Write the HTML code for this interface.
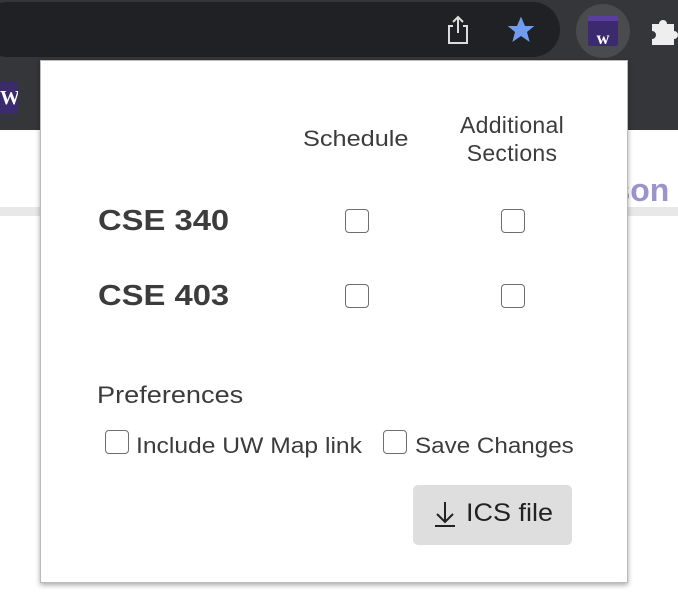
<!DOCTYPE html><html><head><style>
body{margin:0;width:678px;height:612px;position:relative;overflow:hidden;background:#fff;font-family:"Liberation Sans",sans-serif;color:#3c3c3c}
.a{position:absolute}
.s{transform-origin:0 0}
.cb{position:absolute;border:1.5px solid #6e6e6e;border-radius:4px;background:#fff;box-sizing:border-box;width:24px;height:24px}
</style></head><body>
<div class="a" style="left:0;top:0;width:678px;height:130px;background:#35363a"></div>
<div class="a" style="left:-20px;top:2px;width:580px;height:55px;background:#202124;border-radius:28px"></div>
<svg class="a" style="left:444px;top:14px" width="28" height="32" viewBox="0 0 28 32"><path d="M9 12H5v17h18V12h-4M14 3v16M9 8l5-5 5 5" fill="none" stroke="#ddd" stroke-width="2"/></svg>
<svg class="a" style="left:505px;top:14px" width="32" height="32" viewBox="0 0 24 24"><path d="M12 2l3 7h7l-5.5 4.5 2 7.5L12 16.5 5.5 21l2-7.5L2 9h7z" fill="#6f9cf0"/></svg>
<div class="a" style="left:576px;top:4px;width:54px;height:54px;border-radius:27px;background:#4a4b4f"></div>
<div class="a" style="left:588px;top:16px;width:30px;height:30px;background:#3b2a6e;border-radius:2px;color:#fff;font:bold 18px 'Liberation Serif',serif;text-align:center;line-height:34px;box-sizing:border-box;border-top:5px solid #5b3fa0">w</div>
<svg class="a" style="left:650px;top:16px" width="28" height="30" viewBox="0 0 28 30"><path d="M2 8h7a4 4 0 118 0h7v7a4 4 0 110 8v6H2v-6a4 4 0 100-8z" fill="#eee"/></svg>
<div class="a" style="left:0;top:82px;width:18px;height:32px;background:#3b2a6e;color:#fff;font:bold 20px 'Liberation Serif',serif;line-height:32px;overflow:hidden">W</div>
<div class="a" style="left:0;top:207px;width:678px;height:9px;background:#e8e8e8"></div>
<div class="a" style="left:600px;top:172px;color:#9b93cc;font:bold 32px 'Liberation Sans',sans-serif">rson</div>
<div class="a" style="left:40px;top:60px;width:588px;height:523px;background:#fff;box-shadow:0 2px 5px rgba(0,0,0,.35);border:1px solid #bbb;box-sizing:border-box"></div>
<div class="a s" style="left:303px;top:126px;font-size:22px;transform:scaleX(1.15)">Schedule</div>
<div class="a" style="left:432px;top:111px;width:160px;text-align:center;font-size:23px;line-height:28px;letter-spacing:.3px">Additional<br>Sections</div>
<div class="a s" style="left:98px;top:205px;font-size:29px;font-weight:bold;transform:scaleX(1.13)">CSE 340</div>
<div class="a s" style="left:98px;top:280px;font-size:29px;font-weight:bold;transform:scaleX(1.13)">CSE 403</div>
<div class="cb" style="left:345px;top:209px"></div><div class="cb" style="left:501px;top:209px"></div>
<div class="cb" style="left:345px;top:284px"></div><div class="cb" style="left:501px;top:284px"></div>
<div class="a s" style="left:97px;top:382px;font-size:24px;transform:scaleX(1.13)">Preferences</div>
<div class="cb" style="left:105px;top:430px"></div>
<div class="a s" style="left:136px;top:433px;font-size:22px;transform:scaleX(1.12)">Include UW Map link</div>
<div class="cb" style="left:383px;top:430px"></div>
<div class="a s" style="left:415px;top:433px;font-size:22px;transform:scaleX(1.1)">Save Changes</div>
<div class="a" style="left:413px;top:485px;width:159px;height:60px;background:#dedede;border-radius:5px"></div>
<svg class="a" style="left:433px;top:500px" width="24" height="28" viewBox="0 0 24 28"><path d="M12 2v20M4 14l8 8 8-8M2 26h20" fill="none" stroke="#222" stroke-width="2"/></svg>
<div class="a s" style="left:466px;top:499px;font-size:25px;color:#222;transform:scaleX(1.08)">ICS file</div>
</body></html>
